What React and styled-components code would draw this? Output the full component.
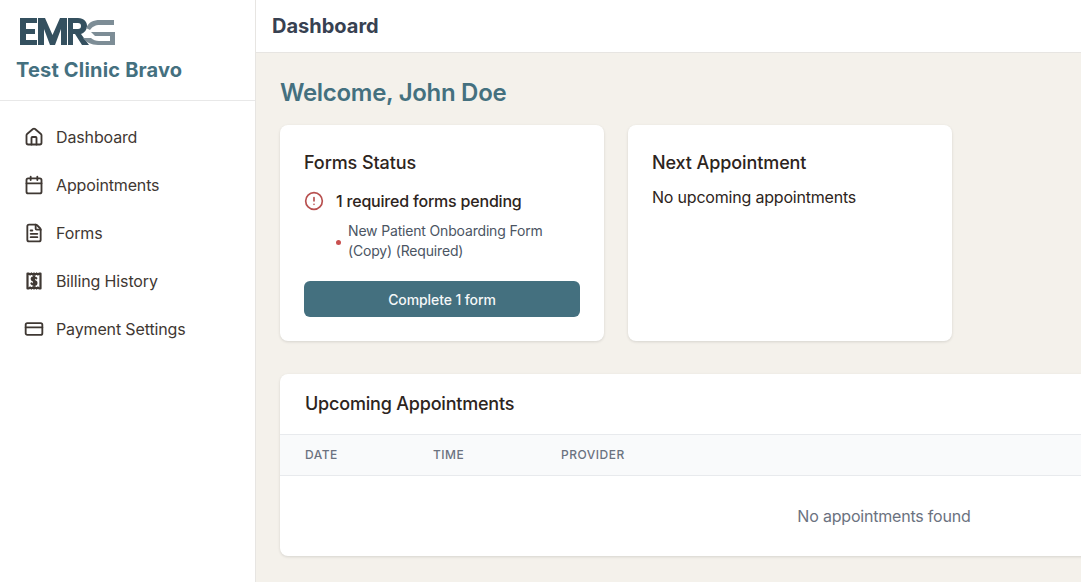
import React from "react";
import styled, { createGlobalStyle } from "styled-components";
import { House, Calendar, FileText, CreditCard, CircleAlert } from "lucide-react";

const GlobalStyle = createGlobalStyle`
  html, body {
    margin: 0;
    padding: 0;
    overflow: hidden;
    background: #f4f1eb;
  }
  * { box-sizing: border-box; }
`;

const Shell = styled.div`
  display: flex;
  width: 1512px;
  height: 582px;
  overflow: hidden;
  font-family: Inter, "Liberation Sans", sans-serif;
  color: #2d2420;
`;

const Sidebar = styled.aside`
  flex: 0 0 256px;
  background: #fff;
  border-right: 1px solid #e7e5e2;
`;

const Brand = styled.div`
  height: 101px;
  padding: 18px 16px 0;
  border-bottom: 1px solid #e8e8e8;
`;

const LogoMark = styled.svg`
  display: block;
  width: 96px;
  height: 28px;
  margin-left: 4px;
`;

const ClinicName = styled.div`
  margin-top: 10px;
  font-size: 20px;
  line-height: 28px;
  font-weight: 700;
  letter-spacing: 0.18px;
  color: #44707f;
`;

const Nav = styled.nav`
  display: flex;
  flex-direction: column;
  gap: 8px;
  padding: 16px 16px;
`;

const NavItem = styled.a`
  display: flex;
  align-items: center;
  gap: 12px;
  height: 40px;
  padding: 0 8px;
  font-size: 16px;
  letter-spacing: -0.14px;
  color: #3f3833;

  svg {
    flex: none;
    width: 20px;
    height: 20px;
    color: #3f3833;
    stroke-width: 2.2;
  }
`;

const Main = styled.div`
  flex: 1;
  min-width: 0;
`;

const Header = styled.header`
  height: 53px;
  padding: 0 16px;
  display: flex;
  align-items: center;
  background: #fff;
  border-bottom: 1px solid #e7e5e2;
  font-size: 20px;
  font-weight: 700;
  color: #374151;
`;

const Content = styled.main`
  padding: 24px 24px;
`;

const Welcome = styled.h1`
  margin: 0 0 16px;
  font-size: 24px;
  line-height: 32px;
  font-weight: 600;
  letter-spacing: -0.3px;
  color: #44707f;
`;

const CardRow = styled.div`
  display: grid;
  grid-template-columns: 324px 324px;
  gap: 24px;
  margin-bottom: 33px;
`;

const Card = styled.section`
  height: 216px;
  padding: 24px;
  background: #fff;
  border-radius: 8px;
  box-shadow: 0 1px 3px rgba(0, 0, 0, 0.12);
`;

const CardTitle = styled.h2`
  margin: 0 0 8px;
  font-size: 18px;
  line-height: 28px;
  font-weight: 500;
  letter-spacing: -0.1px;
  color: #2d2420;
`;

const CardText = styled.p`
  margin: 0;
  font-size: 16px;
  line-height: 24px;
  letter-spacing: -0.2px;
  color: #2d2420;
`;

const Pending = styled.div`
  display: flex;
  align-items: center;
  gap: 12px;
  margin-top: 12px;
  font-size: 16px;
  line-height: 24px;
  font-weight: 500;
  letter-spacing: -0.2px;

  svg {
    width: 20px;
    height: 20px;
    color: #b8504f;
  }
`;

const FormList = styled.ul`
  display: flex;
  align-items: center;
  margin: 8px 0 0;
  padding: 0 0 0 32px;
  list-style: none;
`;

const Dot = styled.span`
  flex: none;
  width: 5px;
  height: 5px;
  margin-right: 7px;
  margin-top: 2px;
  border-radius: 50%;
  background: #c9504f;
`;

const FormName = styled.li`
  font-size: 14px;
  line-height: 20px;
  letter-spacing: -0.17px;
  color: #4b5563;
`;

const PrimaryButton = styled.button`
  display: block;
  width: 100%;
  height: 36px;
  margin-top: 20px;
  border: 0;
  border-radius: 6px;
  background: #44707f;
  color: #f4f7f8;
  font-family: inherit;
  font-size: 14px;
  font-weight: 500;
  letter-spacing: -0.1px;
`;

const TableCard = styled.section`
  height: 182px;
  background: #fff;
  border-radius: 8px;
  box-shadow: 0 1px 3px rgba(0, 0, 0, 0.12);
  overflow: hidden;
`;

const TableTitle = styled.h2`
  margin: 0;
  height: 60px;
  padding: 0 25px 1px;
  display: flex;
  align-items: center;
  font-size: 18px;
  font-weight: 500;
  letter-spacing: -0.2px;
  color: #2d2420;
`;

const HeadRow = styled.div`
  display: grid;
  grid-template-columns: 128px 128px 1fr;
  height: 42px;
  padding: 0 25px 1px;
  align-items: center;
  background: #f9fafb;
  border-top: 1px solid #e8eaed;
  border-bottom: 1px solid #e8eaed;
  font-size: 12px;
  font-weight: 500;
  letter-spacing: 0.5px;
  color: #6b7280;
`;

const EmptyRow = styled.div`
  height: 80px;
  display: flex;
  align-items: center;
  justify-content: center;
  font-size: 16px;
  letter-spacing: -0.2px;
  color: #6b7280;
`;

function EmrgLogo() {
  return (
    <LogoMark viewBox="0 0 96 28" aria-label="EMRG logo">
      <g fill="#34505f" fillRule="evenodd">
        <path d="M0 0H17V5H6V11H15V16H6V22H17V27H0Z" />
        <path d="M18 0h7l7.500 17L40 0h7v27h-6V11l-6 16h-5L24 11v16h-6Z" />
        <path d="M48 0H58C64 0 67 4 67 8C67 12 64 15 61 16L69 27H62L55 16H53V27H48ZM53 5V11H58C60 11 61 10 61 8C61 6 60 5 58 5Z" />
      </g>
      <g fill="#7d8d96">
        <path d="M66 10C69 4 73 2 80 2H94V7H80C75 7 72 9 70 12Z" />
        <path d="M71 14H95V27H78C71 27 66 24 63 20H71C73 22 76 23 79 23H90V18H75Z" />
      </g>
    </LogoMark>
  );
}

function ReceiptIcon() {
  return (
    <svg viewBox="0 0 20 20" fill="none" stroke="currentColor" strokeWidth="1.5" strokeLinejoin="round" strokeLinecap="round">
      <path d="M3.500 2.500h1.300l1.300 1 1.300-1 1.300 1 1.300-1 1.300 1 1.300-1 1.300 1 1.300-1h1.300v15h-1.300l-1.300-1-1.300 1-1.300-1-1.300 1-1.300-1-1.300 1-1.300-1-1.300 1H3.500z" />
      <path d="M12.300 7.300c-.4-.7-1.200-1-2.300-1-1.300 0-2.300.6-2.300 1.700 0 2.500 4.700 1.300 4.700 3.900 0 1.100-1 1.800-2.400 1.800-1.200 0-2.100-.4-2.500-1.200M10 5v10" />
    </svg>
  );
}

const navItems = [
  { label: "Dashboard", icon: <House /> },
  { label: "Appointments", icon: <Calendar /> },
  { label: "Forms", icon: <FileText /> },
  { label: "Billing History", icon: <ReceiptIcon /> },
  { label: "Payment Settings", icon: <CreditCard /> },
];

export default function App() {
  return (
    <Shell>
      <GlobalStyle />
      <Sidebar>
        <Brand>
          <EmrgLogo />
          <ClinicName>Test Clinic Bravo</ClinicName>
        </Brand>
        <Nav>
          {navItems.map((item) => (
            <NavItem key={item.label}>
              {item.icon}
              {item.label}
            </NavItem>
          ))}
        </Nav>
      </Sidebar>
      <Main>
        <Header>Dashboard</Header>
        <Content>
          <Welcome>Welcome, John Doe</Welcome>
          <CardRow>
            <Card>
              <CardTitle>Forms Status</CardTitle>
              <Pending>
                <CircleAlert />
                1 required forms pending
              </Pending>
              <FormList>
                <Dot />
                <FormName>New Patient Onboarding Form (Copy) (Required)</FormName>
              </FormList>
              <PrimaryButton>Complete 1 form</PrimaryButton>
            </Card>
            <Card>
              <CardTitle>Next Appointment</CardTitle>
              <CardText>No upcoming appointments</CardText>
            </Card>
          </CardRow>
          <TableCard>
            <TableTitle>Upcoming Appointments</TableTitle>
            <HeadRow>
              <span>DATE</span>
              <span>TIME</span>
              <span>PROVIDER</span>
            </HeadRow>
            <EmptyRow>No appointments found</EmptyRow>
          </TableCard>
        </Content>
      </Main>
    </Shell>
  );
}
